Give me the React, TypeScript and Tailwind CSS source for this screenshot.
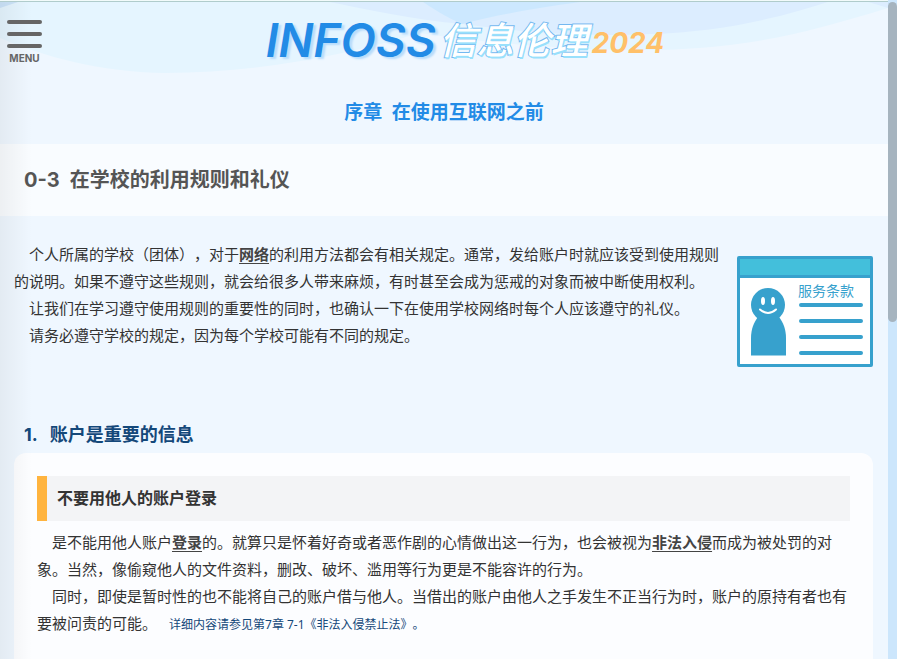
import React from "react";

const bodyFont = "font-['Noto_Sans','Noto_Sans_CJK_SC',sans-serif]";

const Waves: React.FC = () => (
  <svg
    className="absolute inset-x-0 top-0 -z-10 h-20 w-full"
    viewBox="0 0 888 80"
    preserveAspectRatio="none"
    aria-hidden="true"
  >
    <path fill="#e5f5ff" d="M0 0H888V8C800 35 740 50 640 50C560 50 480 42 420 33C350 54 260 73 165 73C100 72 45 57 0 38Z" />
    <path fill="#dcedff" d="M320 0C370 10 415 20 462 24C520 32 580 37 650 34C720 32 780 18 834 0Z" />
    <path fill="#cce8ff" d="M420 0C432 8 446 17 462 24C496 15 540 7 596 0Z" />
    <path fill="#dcedff" d="M862 0L888 8V0Z" />
    <path fill="#cce4fa" d="M0 0H24C16 3 8 5 0 8Z" />
  </svg>
);

const MenuButton: React.FC = () => (
  <button
    type="button"
    className="absolute top-5 left-[7px] z-20 flex w-[35px] flex-col items-center"
  >
    <span className="flex w-full flex-col gap-2">
      <span className="h-1 rounded-full bg-[#666]" />
      <span className="h-1 rounded-full bg-[#666]" />
      <span className="h-1 rounded-full bg-[#666]" />
    </span>
    <span className="mt-1 font-['Inter',sans-serif] text-[10px] leading-3 font-bold text-[#666]">
      MENU
    </span>
  </button>
);

const Logo: React.FC = () => (
  <div className="flex h-20 items-center justify-center pl-[42px] leading-none">
    <span className="font-['Inter',sans-serif] text-[46px] font-semibold text-[#228be6] italic [text-shadow:3px_2px_2px_#b8dcfb]">
      INFOSS
    </span>
    <span className="ml-1 pb-1 font-['Noto_Sans_CJK_SC',sans-serif] text-[37px] font-medium text-white italic [paint-order:stroke_fill] [-webkit-text-stroke:2px_#74b8f0] [text-shadow:1px_2px_0_#99e0fc]">
      信息伦理
    </span>
    <span className="ml-1 pt-1.5 font-['Inter',sans-serif] text-[28px] font-bold text-[#ffc069] italic">
      2024
    </span>
  </div>
);

const TermsPicture: React.FC = () => (
  <svg
    className="h-[111px] w-[136px] flex-none"
    viewBox="0 0 136 111"
    role="img"
    aria-label="服务条款"
  >
    <rect x="1.5" y="1.5" width="133" height="108" rx="0.5" fill="white" stroke="#37a1cd" strokeWidth="3" />
    <rect x="3" y="3" width="130" height="16" fill="#43bfdb" />
    <path d="M2 20.5H134" stroke="#37a1cd" strokeWidth="3" />
    <circle cx="31" cy="49" r="17" fill="#37a1cd" />
    <path d="M14 99.500V82C14 73 17 66 21 61H42C46 66 49 73 49 82V99.500Z" fill="#37a1cd" />
    <ellipse cx="26" cy="45" rx="2" ry="4" fill="white" />
    <ellipse cx="36" cy="45" rx="2" ry="4" fill="white" />
    <path d="M23 53.500Q31 60.500 39 53.500" fill="none" stroke="white" strokeWidth="2" strokeLinecap="round" />
    <text x="61" y="40" fontSize="14" fill="#37a1cd" fontFamily="'Noto Sans CJK SC', sans-serif">
      服务条款
    </text>
    <path d="M64 49H124M64 65H124M64 81H124M64 97H124" stroke="#37a1cd" strokeWidth="4" strokeLinecap="round" />
  </svg>
);

interface TermProps {
  children: React.ReactNode;
}

const Term: React.FC<TermProps> = ({ children }) => (
  <a href="#term" className="font-bold text-[#444] underline underline-offset-3">
    {children}
  </a>
);

export default function App() {
  return (
    <div
      className={`flex h-screen overflow-hidden bg-[#eff7ff] text-[#333] [text-spacing-trim:space-all] ${bodyFont}`}
    >
      <div className="relative isolate min-w-0 flex-1 overflow-hidden">
        <Waves />
        <div className="absolute inset-y-0 left-0 z-10 w-8 bg-linear-to-r from-black/5 to-transparent" />
        <div className="absolute inset-x-0 top-0 z-10 h-[2px] border-b border-[#b0cccc] bg-[#f2fbfb]" />
        <MenuButton />

        <header className="h-36">
          <Logo />
          <p className="pt-4 text-center text-[19px] leading-8 font-bold text-[#228be6]">
            序章&ensp;在使用互联网之前
          </p>
        </header>

        <div className="bg-[#f9fcff] px-6 py-5">
          <h1 className="font-['Inter','Noto_Sans_CJK_SC',sans-serif] text-xl leading-8 font-bold text-[#555]">
            0-3&ensp;在学校的利用规则和礼仪
          </h1>
        </div>

        <main className="pt-[25px] pr-[15px] pl-[14px]">
          <section className="flex items-start gap-4">
            <div className="min-w-0 flex-1 text-[15px] leading-[27px]">
              <p className="indent-[15px]">
                个人所属的学校（团体），对于<Term>网络</Term>
                的利用方法都会有相关规定。通常，发给账户时就应该受到使用规则的说明。如果不遵守这些规则，就会给很多人带来麻烦，有时甚至会成为惩戒的对象而被中断使用权利。
              </p>
              <p className="indent-[15px]">
                让我们在学习遵守使用规则的重要性的同时，也确认一下在使用学校网络时每个人应该遵守的礼仪。
              </p>
              <p className="indent-[15px]">
                请务必遵守学校的规定，因为每个学校可能有不同的规定。
              </p>
            </div>
            <div className="pt-[15px]">
              <TermsPicture />
            </div>
          </section>

          <section className="pt-[50px]">
            <h2 className="px-2.5 py-1 font-['Inter','Noto_Sans_CJK_SC',sans-serif] text-lg leading-7 font-bold text-[#14487a]">
              1.<span className="ml-3">账户是重要的信息</span>
            </h2>
            <div className="rounded-xl bg-[#fcfdff] p-[23px] pb-16">
              <h3 className="border-l-10 border-[#ffb43f] bg-[#f3f4f6] px-2.5 text-base leading-[45px] font-bold">
                不要用他人的账户登录
              </h3>
              <div className="pt-2 text-[15px] leading-[27px]">
                <p className="indent-[15px]">
                  是不能用他人账户<Term>登录</Term>
                  的。就算只是怀着好奇或者恶作剧的心情做出这一行为，也会被视为
                  <Term>非法入侵</Term>
                  而成为被处罚的对象。当然，像偷窥他人的文件资料，删改、破坏、滥用等行为更是不能容许的行为。
                </p>
                <p className="indent-[15px]">
                  同时，即使是暂时性的也不能将自己的账户借与他人。当借出的账户由他人之手发生不正当行为时，账户的原持有者也有要被问责的可能。
                  <a href="#chapter-7" className="ml-3 text-xs text-[#14487a]">
                    详细内容请参见第7章 7-1《非法入侵禁止法》。
                  </a>
                </p>
              </div>
            </div>
          </section>
        </main>
      </div>

      <div className="w-[9px] flex-none bg-[#cce6fc] pt-0.5">
        <div className="h-80 rounded-full bg-[#a6b4bf]" />
      </div>
    </div>
  );
}
